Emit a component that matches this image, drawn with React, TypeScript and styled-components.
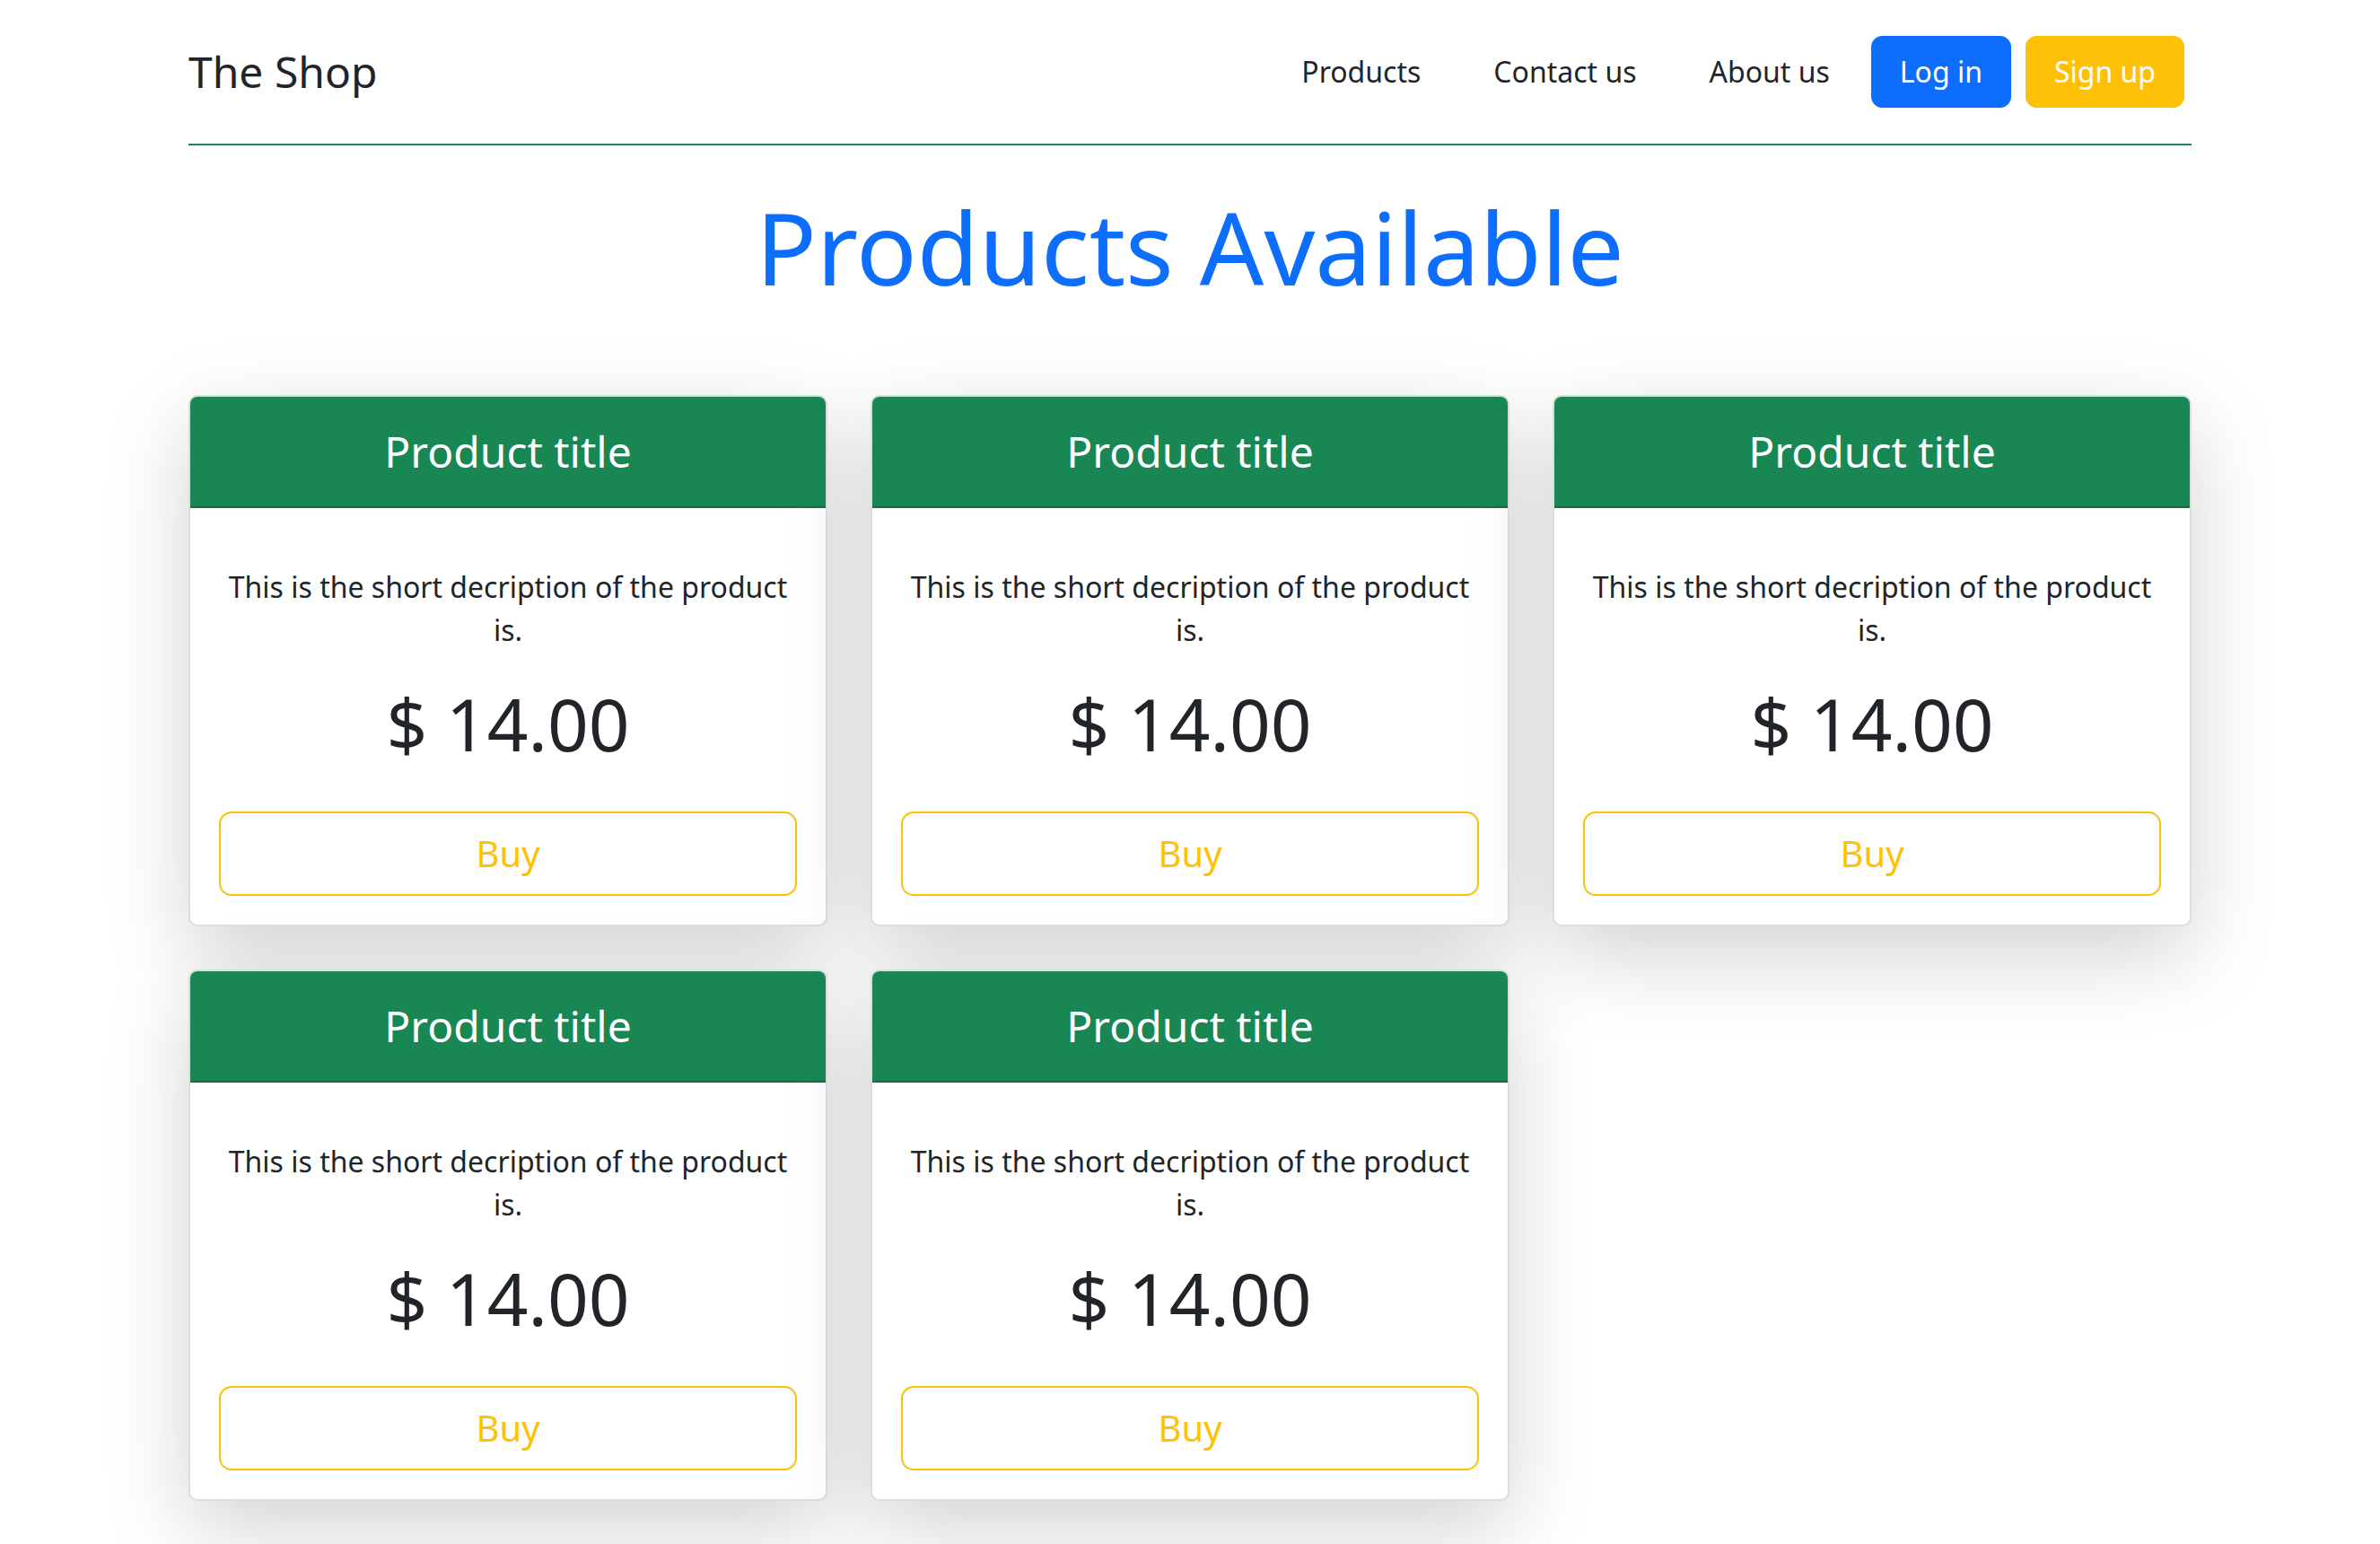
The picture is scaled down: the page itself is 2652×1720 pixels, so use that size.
import React from "react";
import styled, { createGlobalStyle } from "styled-components";

const GlobalStyle = createGlobalStyle`
  html, body {
    margin: 0;
    padding: 0;
    background: #ffffff;
  }
  body {
    font-family: "Noto Sans", "Open Sans", sans-serif;
    color: #212529;
  }
  * { box-sizing: border-box; }
`;

const Page = styled.div`
  width: 2232px;
  margin: 0 auto;
  padding: 40px 0 60px;
`;

const Header = styled.header`
  display: flex;
  align-items: center;
  padding-bottom: 40px;
  border-bottom: 2px solid #198754;
`;

const Brand = styled.a`
  font-size: 48px;
  line-height: 1.5;
  color: #212529;
  text-decoration: none;
`;

const Nav = styled.nav`
  margin-left: auto;
  display: flex;
  align-items: center;
  padding-right: 8px;
`;

const NavLink = styled.a<{ $last?: boolean }>`
  font-size: 32px;
  line-height: 1.5;
  color: #212529;
  text-decoration: none;
  margin-right: ${(p) => (p.$last ? "46px" : "81px")};
`;

const HeaderButton = styled.button<{ $variant: "primary" | "warning" }>`
  font-family: inherit;
  font-size: 32px;
  line-height: 1.5;
  padding: 15px 31px;
  border-radius: 12px;
  color: #ffffff;
  border: 1px solid ${(p) => (p.$variant === "primary" ? "#0d6efd" : "#ffc107")};
  background: ${(p) => (p.$variant === "primary" ? "#0d6efd" : "#ffc107")};
  & + & {
    margin-left: 16px;
  }
`;

const Title = styled.h1`
  margin: 46px 0 98px;
  font-size: 112px;
  line-height: 1.2;
  font-weight: 400;
  text-align: center;
  color: #0d6efd;
`;

const Grid = styled.div`
  display: grid;
  grid-template-columns: repeat(3, 1fr);
  gap: 48px;
`;

const Card = styled.div`
  border: 2px solid #dddddd;
  border-radius: 10px;
  overflow: hidden;
  background: #ffffff;
  box-shadow: 0 32px 96px rgba(0, 0, 0, 0.175);
  text-align: center;
`;

const CardHeader = styled.div`
  background: #198754;
  border-bottom: 2px solid #146c43;
  padding: 32px 16px;
`;

const CardTitle = styled.h4`
  margin: 0;
  font-size: 48px;
  line-height: 1.2;
  font-weight: 400;
  color: #ffffff;
`;

const CardBody = styled.div`
  padding: 32px;
  display: flex;
  flex-direction: column;
`;

const Description = styled.p`
  margin: 32px 0;
  font-size: 32px;
  line-height: 1.5;
`;

const Price = styled.div`
  margin: 0 0 50px;
  font-size: 80px;
  line-height: 1.2;
  font-weight: 400;
`;

const BuyButton = styled.button`
  font-family: inherit;
  width: 100%;
  font-size: 40px;
  line-height: 1.5;
  padding: 15px 32px;
  border: 2px solid #ffc107;
  border-radius: 14px;
  background: transparent;
  color: #ffc107;
`;

const products = [1, 2, 3, 4, 5].map((id) => ({
  id,
  title: "Product title",
  description: "This is the short decription of the product is.",
  price: "$ 14.00",
}));

export default function App() {
  return (
    <>
      <GlobalStyle />
      <Page>
        <Header>
          <Brand href="#">The Shop</Brand>
          <Nav>
            <NavLink href="#">Products</NavLink>
            <NavLink href="#">Contact us</NavLink>
            <NavLink href="#" $last>
              About us
            </NavLink>
            <HeaderButton $variant="primary">Log in</HeaderButton>
            <HeaderButton $variant="warning">Sign up</HeaderButton>
          </Nav>
        </Header>
        <Title>Products Available</Title>
        <Grid>
          {products.map((p) => (
            <Card key={p.id}>
              <CardHeader>
                <CardTitle>{p.title}</CardTitle>
              </CardHeader>
              <CardBody>
                <Description>{p.description}</Description>
                <Price>{p.price}</Price>
                <BuyButton>Buy</BuyButton>
              </CardBody>
            </Card>
          ))}
        </Grid>
      </Page>
    </>
  );
}
